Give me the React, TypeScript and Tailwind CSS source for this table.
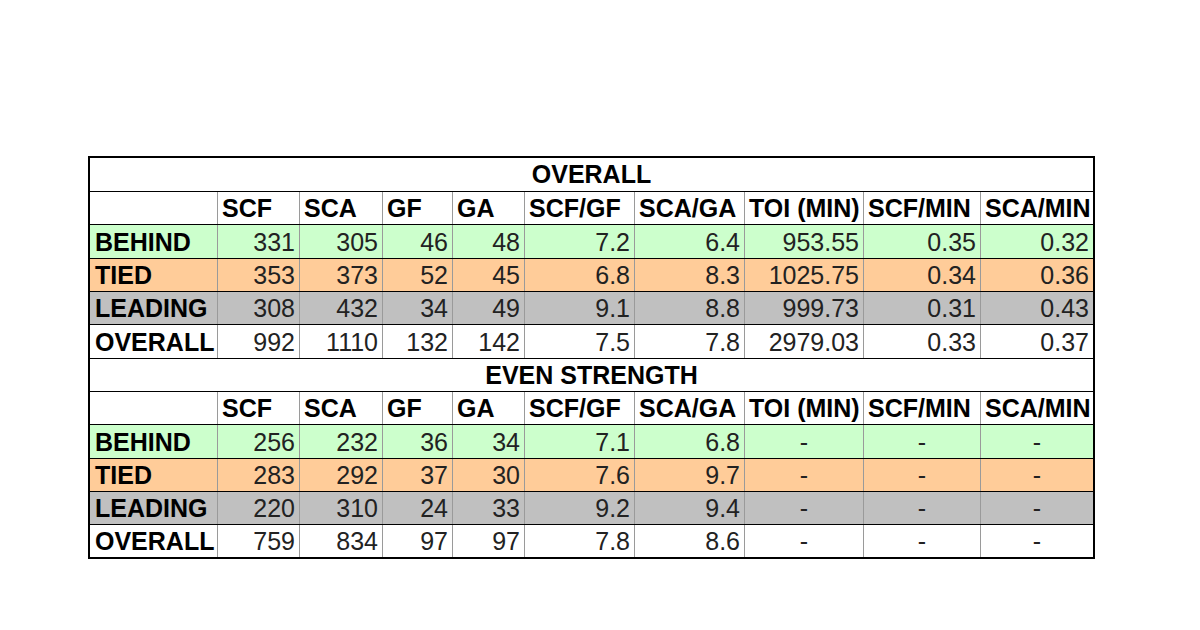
import React from "react";

type Row = { label: string; bg: string; values: string[] };

const COLS = [
  "w-[128px]",
  "w-[82px]",
  "w-[83px]",
  "w-[70px]",
  "w-[72px]",
  "w-[110px]",
  "w-[110px]",
  "w-[119px]",
  "w-[117px]",
  "w-[112px]",
];

const HEADERS = ["SCF", "SCA", "GF", "GA", "SCF/GF", "SCA/GA", "TOI (MIN)", "SCF/MIN", "SCA/MIN"];

const overall: Row[] = [
  { label: "BEHIND", bg: "bg-[#ccffcc]", values: ["331", "305", "46", "48", "7.2", "6.4", "953.55", "0.35", "0.32"] },
  { label: "TIED", bg: "bg-[#ffcc99]", values: ["353", "373", "52", "45", "6.8", "8.3", "1025.75", "0.34", "0.36"] },
  { label: "LEADING", bg: "bg-[#c0c0c0]", values: ["308", "432", "34", "49", "9.1", "8.8", "999.73", "0.31", "0.43"] },
  { label: "OVERALL", bg: "bg-white", values: ["992", "1110", "132", "142", "7.5", "7.8", "2979.03", "0.33", "0.37"] },
];

const even: Row[] = [
  { label: "BEHIND", bg: "bg-[#ccffcc]", values: ["256", "232", "36", "34", "7.1", "6.8", "-", "-", "-"] },
  { label: "TIED", bg: "bg-[#ffcc99]", values: ["283", "292", "37", "30", "7.6", "9.7", "-", "-", "-"] },
  { label: "LEADING", bg: "bg-[#c0c0c0]", values: ["220", "310", "24", "33", "9.2", "9.4", "-", "-", "-"] },
  { label: "OVERALL", bg: "bg-white", values: ["759", "834", "97", "97", "7.8", "8.6", "-", "-", "-"] },
];

function TitleRow({ title, h }: { title: string; h: string }) {
  return (
    <div className={`flex ${h} items-center justify-center border-b border-black bg-white`}>
      <span className="text-[25px] font-bold leading-none text-black">{title}</span>
    </div>
  );
}

function HeaderRow({ h }: { h: string }) {
  return (
    <div className={`flex ${h} border-b border-black bg-white`}>
      <div className={`${COLS[0]} shrink-0 border-r border-[#9a9a9a]`} />
      {HEADERS.map((hd, i) => (
        <div
          key={hd}
          className={`${COLS[i + 1]} shrink-0 flex items-center overflow-visible whitespace-nowrap pl-[4px] pt-[1px] text-[25px] font-bold leading-none text-black ${
            i < HEADERS.length - 1 ? "border-r border-[#9a9a9a]" : ""
          }`}
        >
          {hd}
        </div>
      ))}
    </div>
  );
}

function DataRow({ row, h, last }: { row: Row; h: string; last?: boolean }) {
  return (
    <div className={`flex ${h} ${row.bg} ${last ? "" : "border-b border-black"}`}>
      <div
        className={`${COLS[0]} shrink-0 flex items-center whitespace-nowrap border-r border-[#9a9a9a] pl-[5px] pt-[1px] text-[25px] font-bold leading-none text-black`}
      >
        {row.label}
      </div>
      {row.values.map((v, i) => (
        <div
          key={i}
          className={`${COLS[i + 1]} shrink-0 flex items-center whitespace-nowrap pt-[1px] text-[25px] leading-none text-[#222] ${
            v === "-" ? "justify-center" : "justify-end pr-[4px]"
          } ${i < row.values.length - 1 ? "border-r border-[#9a9a9a]" : ""}`}
        >
          {v}
        </div>
      ))}
    </div>
  );
}

export default function App() {
  return (
    <div className="h-[630px] w-[1200px] bg-white font-['Liberation_Sans',Arial,sans-serif] pl-[88px] pt-[156px]">
      <div className="w-[1007px] border-2 border-black">
        <TitleRow title="OVERALL" h="h-[34px]" />
        <HeaderRow h="h-[33px]" />
        <DataRow row={overall[0]} h="h-[34px]" />
        <DataRow row={overall[1]} h="h-[33px]" />
        <DataRow row={overall[2]} h="h-[33px]" />
        <DataRow row={overall[3]} h="h-[34px]" />
        <TitleRow title="EVEN STRENGTH" h="h-[33px]" />
        <HeaderRow h="h-[33px]" />
        <DataRow row={even[0]} h="h-[34px]" />
        <DataRow row={even[1]} h="h-[33px]" />
        <DataRow row={even[2]} h="h-[33px]" />
        <DataRow row={even[3]} h="h-[32px]" last />
      </div>
    </div>
  );
}
